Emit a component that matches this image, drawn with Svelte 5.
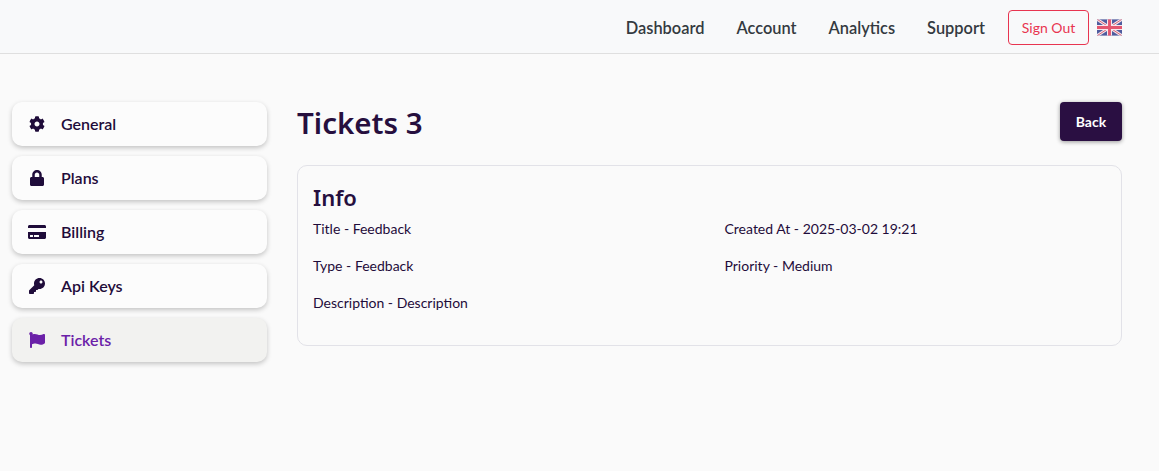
<script>
  const menu = [
    { label: 'General', vb: '0 0 512 512', d: 'M487.4 315.7l-42.6-24.6c4.3-23.2 4.3-47 0-70.2l42.6-24.6c4.9-2.8 7.1-8.6 5.5-14-11.1-35.6-30-67.8-54.7-94.6-3.8-4.1-10-5.1-14.8-2.3L380.8 110c-17.9-15.4-38.5-27.3-60.8-35.1V25.8c0-5.6-3.9-10.5-9.4-11.7-36.7-8.2-74.3-7.8-109.2 0-5.5 1.2-9.4 6.1-9.4 11.7V75c-22.2 7.9-42.8 19.8-60.8 35.1L88.7 85.5c-4.9-2.8-11-1.9-14.8 2.3-24.7 26.7-43.6 58.9-54.7 94.6-1.7 5.4.6 11.2 5.5 14L67.3 221c-4.3 23.2-4.3 47 0 70.2l-42.6 24.6c-4.9 2.8-7.1 8.6-5.5 14 11.1 35.6 30 67.8 54.7 94.6 3.8 4.1 10 5.1 14.8 2.3l42.6-24.6c17.9 15.4 38.5 27.3 60.8 35.1v49.2c0 5.6 3.9 10.5 9.4 11.7 36.7 8.2 74.3 7.8 109.2 0 5.5-1.2 9.4-6.1 9.4-11.7v-49.2c22.2-7.9 42.8-19.8 60.8-35.1l42.6 24.6c4.9 2.8 11 1.9 14.8-2.3 24.7-26.7 43.6-58.9 54.7-94.6 1.5-5.5-.7-11.3-5.6-14.1zM256 336c-44.1 0-80-35.9-80-80s35.9-80 80-80 80 35.9 80 80-35.9 80-80 80z' },
    { label: 'Plans', vb: '0 0 448 512', d: 'M400 224h-24v-72C376 68.2 307.8 0 224 0S72 68.2 72 152v72H48c-26.5 0-48 21.5-48 48v192c0 26.5 21.5 48 48 48h352c26.5 0 48-21.5 48-48V272c0-26.5-21.5-48-48-48zm-104 0H152v-72c0-39.7 32.3-72 72-72s72 32.3 72 72v72z' },
    { label: 'Billing', vb: '0 0 576 512', d: 'M0 432c0 26.5 21.5 48 48 48h480c26.5 0 48-21.5 48-48V256H0v176zm192-68c0-6.6 5.4-12 12-12h136c6.6 0 12 5.4 12 12v40c0 6.6-5.4 12-12 12H204c-6.6 0-12-5.4-12-12v-40zm-128 0c0-6.6 5.4-12 12-12h72c6.6 0 12 5.4 12 12v40c0 6.6-5.4 12-12 12H76c-6.6 0-12-5.4-12-12v-40zM576 80v48H0V80c0-26.5 21.5-48 48-48h480c26.5 0 48 21.5 48 48z' },
    { label: 'Api Keys', vb: '0 0 512 512', d: 'M512 176.001C512 273.203 433.202 352 336 352c-11.22 0-22.19-1.062-32.827-3.069l-24.012 27.014A23.999 23.999 0 0 1 261.223 384H224v40c0 13.255-10.745 24-24 24h-40v40c0 13.255-10.745 24-24 24H24c-13.255 0-24-10.745-24-24v-78.059c0-6.365 2.529-12.47 7.029-16.971l161.802-161.802C163.108 213.814 160 195.271 160 176 160 78.798 238.797.001 335.999 0 433.488-.001 512 78.511 512 176.001zM336 128c0 26.51 21.49 48 48 48s48-21.49 48-48-21.49-48-48-48-48 21.49-48 48z' },
    { label: 'Tickets', vb: '0 0 512 512', active: true, d: 'M349.565 98.783C295.978 98.783 251.721 64 184.348 64c-24.955 0-47.309 4.384-68.045 12.013a55.947 55.947 0 0 0 3.586-23.562C118.117 24.015 94.806 1.206 66.338.048 34.345-1.254 8 24.296 8 56c0 19.026 9.497 35.825 24 45.945V488c0 13.255 10.745 24 24 24h16c13.255 0 24-10.745 24-24v-94.4c28.311-12.064 63.582-22.122 114.435-22.122 53.588 0 97.844 34.783 165.217 34.783 48.169 0 86.667-16.294 122.505-40.858C506.84 359.452 512 349.571 512 339.045v-243.1c0-23.393-24.269-38.87-45.485-29.016-34.338 15.948-76.454 31.854-116.95 31.854z' }
  ];
  const links = ['Dashboard', 'Account', 'Analytics', 'Support'];
  const info = [
    'Title - Feedback', 'Created At - 2025-03-02 19:21',
    'Type - Feedback', 'Priority - Medium',
    'Description - Description'
  ];
</script>

<header class="topbar">
  <nav class="links">
    {#each links as link}
      <a href="#top" class="link">{link}</a>
    {/each}
  </nav>
  <button class="signout">Sign Out</button>
  <svg class="flag" viewBox="0 0 60 40" aria-label="English">
    <clipPath id="uk"><rect width="60" height="40" rx="3" /></clipPath>
    <g clip-path="url(#uk)">
      <rect width="60" height="40" fill="#4f5c9e" />
      <path d="M0 0L60 40M60 0L0 40" stroke="#f2e4e8" stroke-width="7" />
      <path d="M0 0L60 40M60 0L0 40" stroke="#d9667c" stroke-width="2.4" />
      <path d="M30 0V40M0 20H60" stroke="#f6e8ec" stroke-width="12" />
      <path d="M30 0V40M0 20H60" stroke="#e4566e" stroke-width="7" />
    </g>
  </svg>
</header>

<div class="page">
  <aside class="side">
    {#each menu as item}
      <a href="#top" class="item" class:active={item.active}>
        <span class="ico"><svg viewBox={item.vb}><path d={item.d} fill="currentColor" /></svg></span>
        <span class="label">{item.label}</span>
      </a>
    {/each}
  </aside>

  <main class="main">
    <div class="head">
      <h1>Tickets 3</h1>
      <button class="back">Back</button>
    </div>
    <section class="card">
      <h2>Info</h2>
      <div class="grid">
        {#each info as row}
          <p>{row}</p>
        {/each}
      </div>
    </section>
  </main>
</div>

<style>
  :global(body) {
    background: #fafafa;
    color: #1f0c3a;
    font-family: "Lato", "Noto Sans", sans-serif;
    height: 471px;
    overflow: hidden;
  }
  .topbar {
    height: 54px;
    box-sizing: border-box;
    background: #f8f9fa;
    border-bottom: 1px solid #dfdfdf;
    display: flex;
    align-items: center;
    justify-content: flex-end;
    padding: 2px 37px 0 0;
  }
  .links {
    display: flex;
    gap: 32px;
    margin-right: 23px;
  }
  .link {
    color: #343a40;
    font-size: 16.4px;
    font-weight: 600;
    text-decoration: none;
  }
  .signout {
    width: 81px;
    height: 35px;
    box-sizing: border-box;
    background: transparent;
    border: 1px solid #e83550;
    border-radius: 4px;
    color: #e83550;
    font: inherit;
    font-size: 14px;
    padding: 0 0 1px;
    margin-right: 8px;
  }
  .flag {
    width: 25px;
    height: 17px;
    margin-top: -1px;
  }
  .page {
    display: flex;
    padding: 48px 37px 0 12px;
    gap: 30px;
  }
  .side {
    width: 255px;
    flex: none;
    display: flex;
    flex-direction: column;
    gap: 10px;
  }
  .item {
    height: 44px;
    display: flex;
    align-items: center;
    padding-left: 16px;
    border-radius: 10px;
    background: #fcfcfc;
    color: #1f0c3a;
    box-shadow: 0 2px 5px rgba(0, 0, 0, 0.22);
    font-size: 16px;
    font-weight: 600;
    text-decoration: none;
  }
  .item.active {
    background: #f2f2f0;
    color: #6b21a8;
  }
  .label {
    padding-bottom: 2px;
  }
  .ico {
    width: 18px;
    height: 16px;
    margin-right: 15px;
    display: flex;
    justify-content: center;
  }
  .ico svg {
    height: 16px;
    width: 18px;
  }
  .main {
    flex: 1;
    min-width: 0;
  }
  .head {
    display: flex;
    justify-content: space-between;
    align-items: flex-start;
    margin-bottom: 21px;
  }
  h1 {
    margin: 0;
    font-family: "Noto Sans", sans-serif;
    font-size: 29.5px;
    line-height: 42px;
    font-weight: 600;
    color: #260f3e;
  }
  .back {
    width: 62px;
    height: 39px;
    border: 0;
    border-radius: 4px;
    background: #2a0f42;
    color: #fff;
    font: inherit;
    font-size: 14px;
    font-weight: 700;
    box-shadow: 0 1px 4px rgba(0, 0, 0, 0.4);
    padding: 0;
  }
  .card {
    height: 181px;
    box-sizing: border-box;
    border: 1px solid #e2e2e8;
    border-radius: 10px;
    padding: 15px;
  }
  h2 {
    margin: 0 0 5px;
    font-family: "Noto Sans", sans-serif;
    font-size: 22px;
    line-height: 32px;
    font-weight: 600;
    color: #260f3e;
  }
  .grid {
    display: grid;
    grid-template-columns: 411.5px 1fr;
    row-gap: 16px;
  }
  p {
    margin: 0;
    font-size: 14px;
    line-height: 21px;
  }
</style>
